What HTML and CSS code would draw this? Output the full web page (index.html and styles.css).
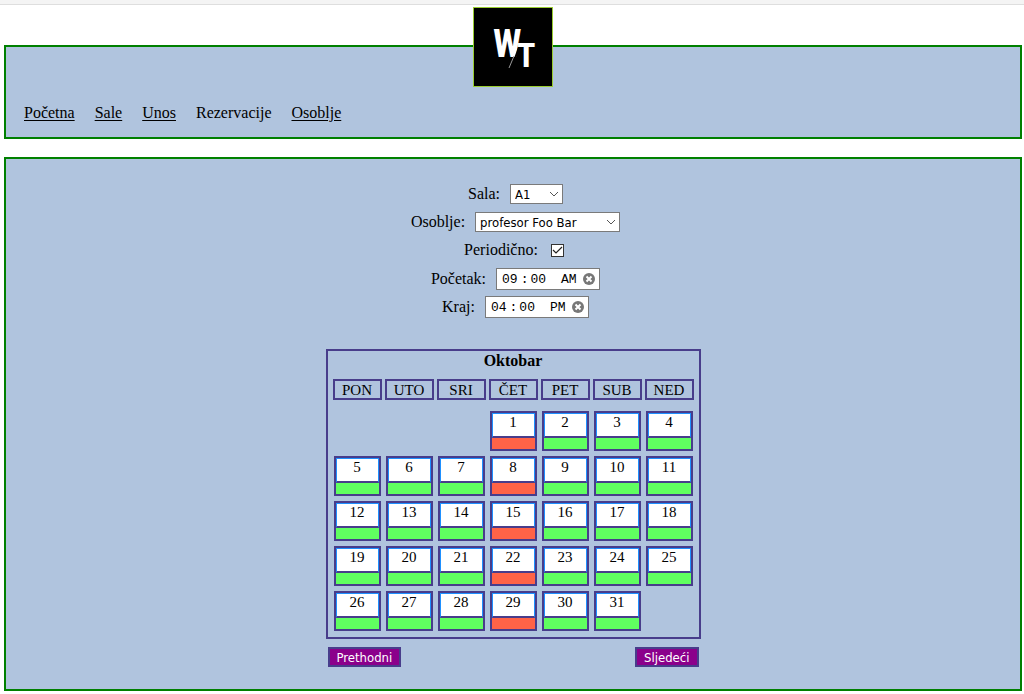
FILE: index.html
```html
<!DOCTYPE html>
<html lang="bs">
<head>
<meta charset="utf-8">
<title>Rezervacije</title>
<link rel="stylesheet" href="styles.css">
</head>
<body>
<div class="topstrip"></div>
<header class="panel header">
  <svg class="logo" viewBox="0 0 80 80" role="img" aria-label="WT">
    <rect class="logo-bg" x="0.5" y="0.5" width="79" height="79"/>
    <text class="logo-w" x="20" y="50">W</text>
    <path class="logo-cut" d="M51 27 L38 62"/>
    <path class="logo-slash" d="M41 49 L36 61"/>
    <text class="logo-t" x="44" y="60">T</text>
  </svg>
  <nav class="nav">
    <a href="#">Početna</a>
    <a href="#">Sale</a>
    <a href="#">Unos</a>
    <a class="current" href="#" aria-current="page">Rezervacije</a>
    <a href="#">Osoblje</a>
  </nav>
</header>
<main class="panel main">
  <form class="form">
    <div class="row"><label for="sala">Sala:</label><select id="sala" class="select room"><option>A1</option></select></div>
    <div class="row"><label for="osoblje">Osoblje:</label><select id="osoblje" class="select staff"><option>profesor Foo Bar</option></select></div>
    <div class="row"><label for="periodicno">Periodično:</label><input id="periodicno" class="check" type="checkbox" checked></div>
    <div class="row timed"><label for="pocetak">Početak:</label><div class="time"><input id="pocetak" type="time" value="09:00"><button class="clear" type="button" aria-label="Obriši početak"><svg viewBox="0 0 12 12"><circle cx="6" cy="6" r="6"/><path d="M3.5 3.5 L8.5 8.5 M8.5 3.5 L3.5 8.5"/></svg></button></div></div>
    <div class="row timed"><label for="kraj">Kraj:</label><div class="time"><input id="kraj" type="time" value="16:00"><button class="clear" type="button" aria-label="Obriši kraj"><svg viewBox="0 0 12 12"><circle cx="6" cy="6" r="6"/><path d="M3.5 3.5 L8.5 8.5 M8.5 3.5 L3.5 8.5"/></svg></button></div></div>
  </form>
  <div class="calendar">
    <table class="month">
      <caption>Oktobar</caption>
      <thead>
        <tr><th><div class="dow">PON</div></th><th><div class="dow">UTO</div></th><th><div class="dow">SRI</div></th><th><div class="dow">ČET</div></th><th><div class="dow">PET</div></th><th><div class="dow">SUB</div></th><th><div class="dow">NED</div></th></tr>
      </thead>
      <tbody>
        <tr><td></td><td></td><td></td><td><div class="day busy"><span>1</span></div></td><td><div class="day"><span>2</span></div></td><td><div class="day"><span>3</span></div></td><td><div class="day"><span>4</span></div></td></tr>
        <tr><td><div class="day"><span>5</span></div></td><td><div class="day"><span>6</span></div></td><td><div class="day"><span>7</span></div></td><td><div class="day busy"><span>8</span></div></td><td><div class="day"><span>9</span></div></td><td><div class="day"><span>10</span></div></td><td><div class="day"><span>11</span></div></td></tr>
        <tr><td><div class="day"><span>12</span></div></td><td><div class="day"><span>13</span></div></td><td><div class="day"><span>14</span></div></td><td><div class="day busy"><span>15</span></div></td><td><div class="day"><span>16</span></div></td><td><div class="day"><span>17</span></div></td><td><div class="day"><span>18</span></div></td></tr>
        <tr><td><div class="day"><span>19</span></div></td><td><div class="day"><span>20</span></div></td><td><div class="day"><span>21</span></div></td><td><div class="day busy"><span>22</span></div></td><td><div class="day"><span>23</span></div></td><td><div class="day"><span>24</span></div></td><td><div class="day"><span>25</span></div></td></tr>
        <tr><td><div class="day"><span>26</span></div></td><td><div class="day"><span>27</span></div></td><td><div class="day"><span>28</span></div></td><td><div class="day busy"><span>29</span></div></td><td><div class="day"><span>30</span></div></td><td><div class="day"><span>31</span></div></td><td></td></tr>
      </tbody>
    </table>
  </div>
  <div class="pager">
    <button class="btn" type="button">Prethodni</button>
    <button class="btn" type="button">Sljedeći</button>
  </div>
</main>
</body>
</html>
```
FILE: styles.css
```css
* {
  box-sizing: border-box;
}

body {
  margin: 0;
  background: #fff;
  color: #000;
  font-family: "Liberation Serif", "Times New Roman", serif;
  font-size: 16px;
  line-height: 20px;
}

.topstrip {
  height: 5px;
  background: #f4f4f4;
  border-bottom: 1px solid #dedede;
}

.panel {
  margin: 0 2px 0 4px;
  background: lightsteelblue;
  border: 2px solid green;
}

.header {
  margin-top: 40px;
  margin-bottom: 18px;
}

.logo {
  display: block;
  width: 80px;
  height: 80px;
  margin: -40px auto 0;
}

.logo-bg {
  fill: #000;
  stroke: yellowgreen;
}

.logo-w,
.logo-t {
  fill: #fff;
  font-family: "Roboto Condensed", Roboto, sans-serif;
  font-size: 38px;
}

.logo-w {
  font-weight: bold;
}

.logo-t {
  font-size: 34px;
  font-weight: bold;
}

.logo-cut {
  stroke: #000;
  stroke-width: 2;
}

.logo-slash {
  stroke: #999;
  stroke-width: 1;
}

.nav {
  display: flex;
  flex-wrap: wrap;
  gap: 20px;
  padding: 16px 18px 14px;
}

.nav a {
  color: #000;
  text-underline-offset: 2px;
}

.nav .current {
  text-decoration: none;
}

.main {
  padding: 21px 0 22px;
}

.row {
  display: flex;
  align-items: center;
  justify-content: center;
  gap: 10px;
  height: 28px;
  padding-left: 5px;
}

.timed {
  padding-top: 2px;
}

.select {
  height: 20px;
  padding: 1px 18px 0 4px;
  appearance: none;
  border: 1px solid #7a7a7a;
  border-radius: 0;
  background: #fff url("data:image/svg+xml,%3Csvg xmlns='http://www.w3.org/2000/svg' width='10' height='6'%3E%3Cpath d='M1 1 L5 5 L9 1' fill='none' stroke='%23555'/%3E%3C/svg%3E") no-repeat right 3px center;
  color: #000;
  font: 13px/17px "DejaVu Sans Condensed", Tahoma, sans-serif;
}

.room {
  width: 53px;
}

.staff {
  width: 145px;
}

.check {
  width: 13px;
  height: 13px;
  margin: 0 3px;
  appearance: none;
  border: 1px solid #333;
  background: #fff url("data:image/svg+xml,%3Csvg xmlns='http://www.w3.org/2000/svg' width='11' height='11'%3E%3Cpath d='M1 5 L4 8 L10 2' fill='none' stroke='%23222' stroke-width='1.2'/%3E%3C/svg%3E") no-repeat center;
}

.check:not(:checked) {
  background-image: none;
}

.time {
  display: flex;
  align-items: center;
  width: 104px;
  height: 22px;
  padding: 0 4px 0 3px;
  border: 1px solid #7a7a7a;
  background: #fff;
}

.time input {
  flex: 1;
  min-width: 0;
  height: 20px;
  padding: 1px 0 0;
  border: 0;
  background: none;
  color: #000;
  font: 13px/19px "Liberation Mono", "Courier New", monospace;
}

.time input::-webkit-calendar-picker-indicator {
  display: none;
}

.time input::-webkit-datetime-edit-fields-wrapper {
  display: flex;
}

.time input::-webkit-datetime-edit-hour-field,
.time input::-webkit-datetime-edit-minute-field {
  padding: 0 3px 0 2px;
}

.time input::-webkit-datetime-edit-ampm-field {
  padding: 0 0 0 8px;
}

.clear {
  display: flex;
  padding: 0;
  border: 0;
  background: none;
}

.clear svg {
  width: 12px;
  height: 12px;
}

.clear circle {
  fill: #777;
}

.clear path {
  stroke: #fff;
  stroke-width: 2;
}

.calendar {
  width: 375px;
  margin: 29px auto 0;
  padding: 0 2px 1px 5px;
  border: 2px solid darkslateblue;
}

.month {
  width: 100%;
  table-layout: fixed;
  border-collapse: collapse;
  text-align: center;
}

.month caption {
  padding: 0 3px 8px 0;
  font-weight: bold;
}

.month th {
  padding: 0 3px 11px 0;
  font-weight: normal;
}

.month td {
  padding: 0 4px 5px 1px;
}

.dow {
  height: 21px;
  border: 2px solid darkslateblue;
  font-size: 15px;
  line-height: 19px;
}

.day {
  height: 40px;
  border: 2px solid darkslateblue;
  background: #60ff60;
}

.day span {
  display: block;
  height: 25px;
  border: 1px solid dodgerblue;
  border-bottom: 2px solid darkslateblue;
  background: #fff;
  font-size: 15px;
  line-height: 17px;
}

.busy {
  background: tomato;
}

.pager {
  display: flex;
  justify-content: space-between;
  width: 371px;
  margin: 8px auto 0;
}

.btn {
  height: 20px;
  padding: 1px 7px 0;
  border: 2px solid darkslateblue;
  background: darkmagenta;
  color: #fff;
  font: 13px/15px "DejaVu Sans Condensed", Tahoma, sans-serif;
}
```
